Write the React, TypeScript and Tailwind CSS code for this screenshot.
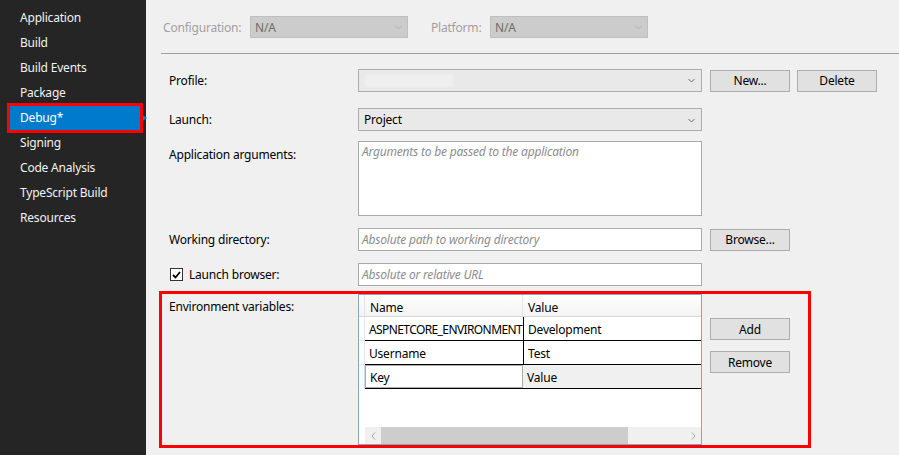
import React from "react";

const font = "font-['Segoe_UI','Noto_Sans','Open_Sans',sans-serif]";

const navItems = [
  "Application",
  "Build",
  "Build Events",
  "Package",
  "Debug*",
  "Signing",
  "Code Analysis",
  "TypeScript Build",
  "Resources",
];

function Chevron({ color = "#6f6f6f" }: { color?: string }) {
  return (
    <svg width="7" height="5" viewBox="0 0 7 5" className="shrink-0">
      <path d="M0.5 1 L3.5 4 L6.5 1" fill="none" stroke={color} strokeWidth="1" />
    </svg>
  );
}

function Button({ children }: { children: React.ReactNode }) {
  return (
    <div className="w-[80px] h-[22px] flex items-center justify-center pt-px bg-[#e1e1e1] border border-[#adadad] text-black">
      {children}
    </div>
  );
}

function Sidebar() {
  return (
    <div className="w-[146px] shrink-0 bg-[#252526] pt-[5px] text-[#f1f1f1] text-[12px]">
      {navItems.map((item) =>
        item === "Debug*" ? (
          <div key={item} className="relative ml-[10px] w-[130px] h-[24px] my-[0.5px] flex items-center pl-[10px] bg-[#007acc] text-white outline-[3px] outline-solid outline-[#ff0000]">
            {item}
            <span className="absolute left-[133px] top-[9px] w-0 h-0 border-y-[3px] border-y-transparent border-l-[4px] border-l-[#007acc]" />
          </div>
        ) : (
          <div key={item} className="h-[25px] flex items-center pl-[20px]">
            {item}
          </div>
        )
      )}
    </div>
  );
}

function EnvGrid() {
  const rows = [
    { name: "ASPNETCORE_ENVIRONMENT", value: "Development" },
    { name: "Username", value: "Test" },
  ];
  return (
    <div className="w-[344px] h-[151px] border border-[#8aa4c4] bg-white flex flex-col">
      <div className="h-[22px] flex bg-gradient-to-b from-white to-[#f3f3f3] border-b border-[#d8d8d8]">
        <div className="w-[6px] border-r border-[#e4e4e4]" />
        <div className="w-[158px] flex items-center pl-[5px] pt-[4px] border-r border-[#e4e4e4]">Name</div>
        <div className="flex-1 flex items-center pl-[5px] pt-[4px]">Value</div>
      </div>
      {rows.map((r) => (
        <div key={r.name} className="h-[24px] flex">
          <div className="w-[6px] border-r border-b border-[#e4e4e4] bg-white" />
          <div className={`w-[158px] flex items-center pl-[4px] pt-[3px] border-b border-black whitespace-nowrap ${r.name.includes("_") ? "tracking-[-0.6px]" : ""}`}>{r.name}</div>
          <div className="flex-1 flex items-center pl-[4px] pt-[3px] border-l border-b border-black">{r.value}</div>
        </div>
      ))}
      <div className="h-[24px] flex">
        <div className="w-[6px] border-r border-[#c5dcf0] bg-[#f7fbff]" />
        <div className="w-[158px] flex border-b border-black">
          <div className="flex-1 flex items-center pl-[4px] pt-[3px] bg-white border border-[#acacac]">Key</div>
        </div>
        <div className="flex-1 flex items-center pl-[4px] pt-[3px] bg-[#f0f0f0] border-b border-black">Value</div>
      </div>
      <div className="flex-1" />
      <div className="h-[17px] flex pl-[6px]">
        <div className="w-[16px] bg-[#f0f0f0] flex items-center justify-center">
          <svg width="5" height="8" viewBox="0 0 5 8">
            <path d="M4 0.5 L1 4 L4 7.5" fill="none" stroke="#a6a6a6" strokeWidth="1" />
          </svg>
        </div>
        <div className="w-[247px] bg-[#cdcdcd]" />
        <div className="flex-1 bg-[#f0f0f0] flex items-center justify-end pr-[5px]">
          <svg width="5" height="8" viewBox="0 0 5 8">
            <path d="M1 0.5 L4 4 L1 7.5" fill="none" stroke="#a6a6a6" strokeWidth="1" />
          </svg>
        </div>
      </div>
    </div>
  );
}

export default function App() {
  return (
    <div className={`${font} w-[899px] h-[455px] flex overflow-hidden text-[12px] leading-[16px] tracking-[-0.2px] text-black`}>
      <Sidebar />
      <div className="flex-1 bg-[#f0f0f0] flex flex-col">
        {/* config / platform */}
        <div className="mt-[16px] h-[22px] flex items-center pl-[17px] text-[#a0a0a0]">
          <div className="w-[87px] pt-px">Configuration:</div>
          <div className="w-[158px] h-[22px] bg-[#cccccc] border border-[#bfbfbf] flex items-center justify-between pl-[4px] pr-[5px] pt-px text-[#6d6d6d]">
            N/A
            <Chevron color="#b4b4b4" />
          </div>
          <div className="w-[59px] ml-[23px] pt-px">Platform:</div>
          <div className="w-[158px] h-[22px] bg-[#cccccc] border border-[#bfbfbf] flex items-center justify-between pl-[4px] pr-[5px] pt-px text-[#6d6d6d]">
            N/A
            <Chevron color="#b4b4b4" />
          </div>
        </div>

        <div className="mt-[15px] ml-[15px] h-px bg-[#a0a0a0]" />

        {/* profile */}
        <div className="mt-[15px] pl-[23px] flex items-center">
          <div className="w-[189px] pt-px">Profile:</div>
          <div className="w-[344px] h-[23px] bg-[#e9e9e9] border border-[#acacac] flex items-center justify-between pl-[6px] pr-[6px]">
            <div className="w-[88px] h-[12px] bg-[#efefef] blur-[1px]" />
            <Chevron />
          </div>
          <div className="ml-[8px] flex gap-[7px]">
            <Button>New...</Button>
            <Button>Delete</Button>
          </div>
        </div>

        {/* launch */}
        <div className="mt-[16px] pl-[23px] flex items-center">
          <div className="w-[189px] pt-px">Launch:</div>
          <div className="w-[344px] h-[23px] bg-[#e9e9e9] border border-[#acacac] flex items-center justify-between pl-[5px] pr-[6px] pt-px">
            Project
            <Chevron />
          </div>
        </div>

        {/* args */}
        <div className="mt-[10px] pl-[23px] flex items-start">
          <div className="w-[189px] pt-[6px]">Application arguments:</div>
          <div className="w-[344px] h-[75px] bg-white border border-[#a9a9a9] pl-[3px] pt-[2px] italic text-[#8d8d8d]">
            Arguments to be passed to the application
          </div>
        </div>

        {/* working dir */}
        <div className="mt-[12px] pl-[23px] flex items-center">
          <div className="w-[189px]">Working directory:</div>
          <div className="w-[344px] h-[23px] bg-white border border-[#a9a9a9] flex items-center pl-[3px] pt-px italic text-[#8d8d8d]">
            Absolute path to working directory
          </div>
          <div className="ml-[8px]">
            <Button>Browse...</Button>
          </div>
        </div>

        {/* launch browser */}
        <div className="mt-[12px] pl-[23px] flex items-center">
          <div className="w-[189px] flex items-center">
            <div className="ml-[1px] w-[13px] h-[13px] bg-white border border-[#333333] flex items-center justify-center">
              <svg width="9" height="8" viewBox="0 0 9 8">
                <path d="M1 4 L3.5 6.5 L8 1" fill="none" stroke="#000" strokeWidth="1.8" />
              </svg>
            </div>
            <span className="ml-[6px] pt-px">Launch browser:</span>
          </div>
          <div className="w-[344px] h-[23px] bg-white border border-[#a9a9a9] flex items-center pl-[3px] pt-px italic text-[#8d8d8d]">
            Absolute or relative URL
          </div>
        </div>

        {/* environment variables */}
        <div className="mt-[5px] ml-[13px] w-[652px] h-[157px] border-[3px] border-[#ff0000] flex items-start pl-[7px]">
          <div className="w-[189px] pt-[5px]">Environment variables:</div>
          <EnvGrid />
          <div className="ml-[8px] pt-[24px] flex flex-col gap-[11px]">
            <Button>Add</Button>
            <Button>Remove</Button>
          </div>
        </div>
      </div>
    </div>
  );
}
